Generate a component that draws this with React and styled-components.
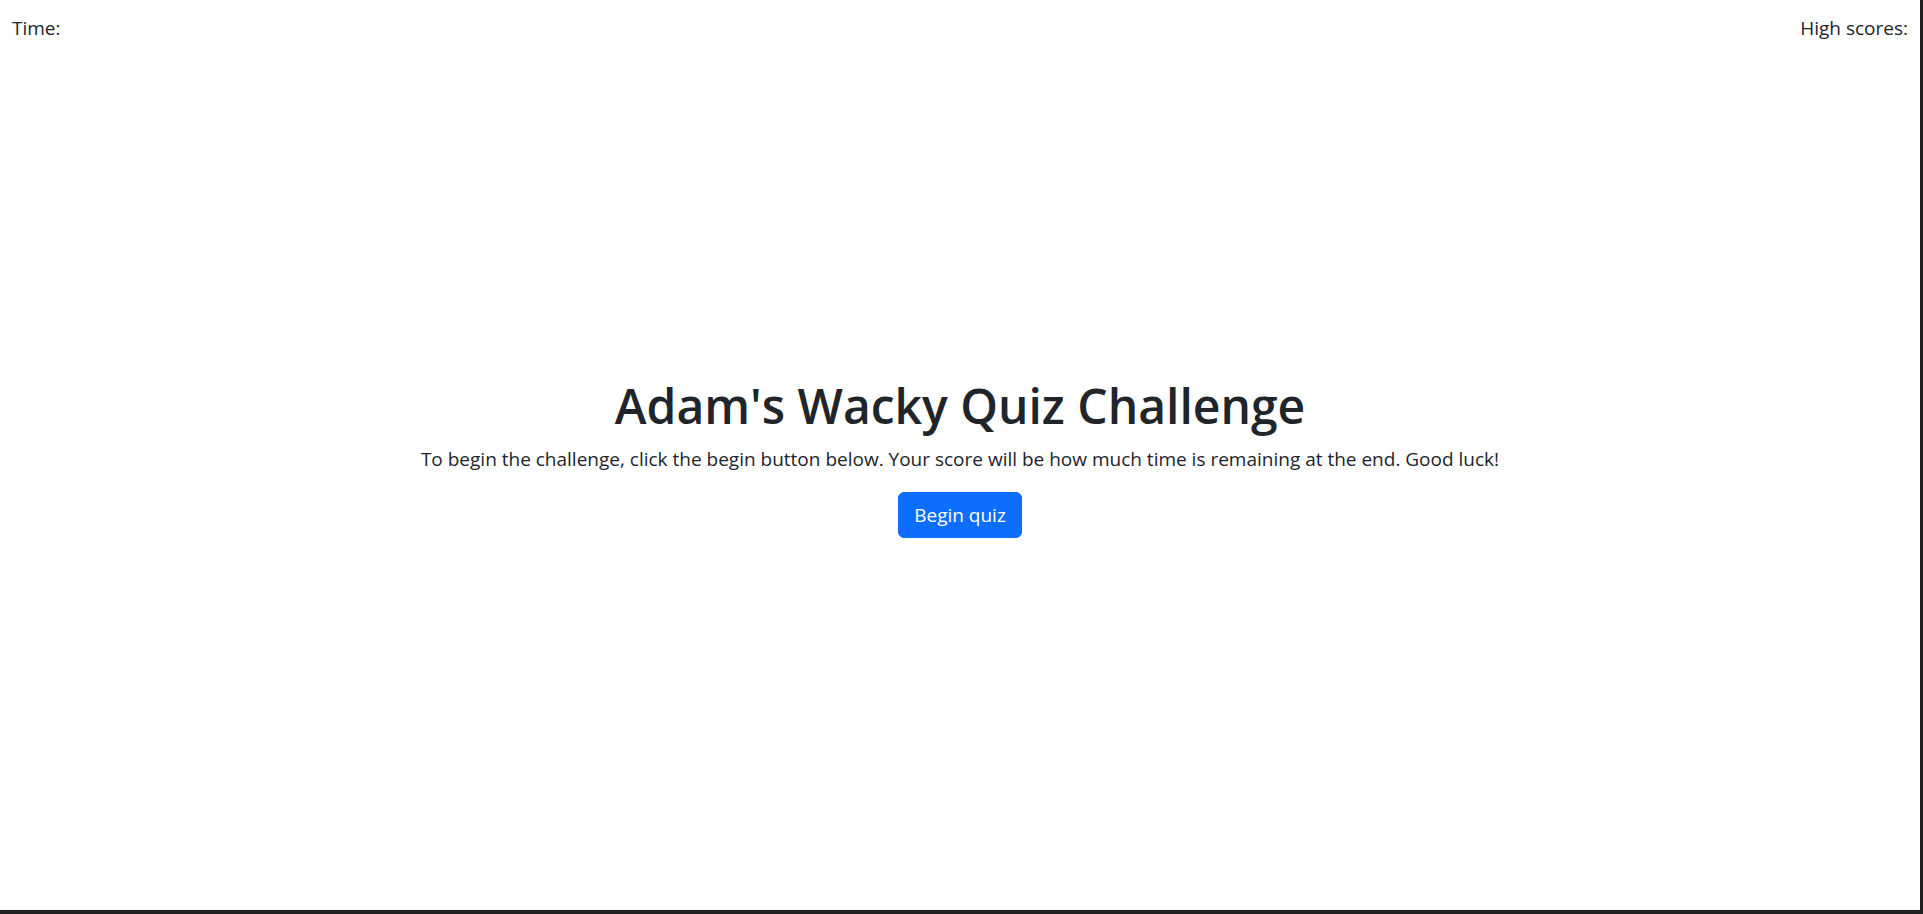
import React from 'react';
import styled, { createGlobalStyle } from 'styled-components';

const GlobalStyle = createGlobalStyle`
  html, body {
    margin: 0;
    padding: 0;
    background: #202020;
  }
  body {
    font-family: "Open Sans", "Liberation Sans", sans-serif;
    color: #212529;
  }
`;

const Page = styled.div`
  width: 1920px;
  height: 910px;
  background: #fff;
  display: flex;
  flex-direction: column;
`;

const TopBar = styled.header`
  display: flex;
  justify-content: space-between;
  padding: 13px 12px 0 12px;
  font-size: 19px;
  line-height: 30px;
`;

const Main = styled.main`
  flex: 1;
  display: flex;
  flex-direction: column;
  align-items: center;
  justify-content: center;
  padding-bottom: 40px;
`;

const Title = styled.h1`
  margin: 0 0 8px 0;
  font-size: 48px;
  font-weight: 600;
  line-height: 60px;
`;

const Intro = styled.p`
  margin: 0 0 18px 0;
  font-size: 19px;
  line-height: 30px;
`;

const Button = styled.button`
  font-family: inherit;
  font-size: 19px;
  line-height: 30px;
  color: #fff;
  background: #0d6efd;
  border: 1px solid #0d6efd;
  border-radius: 6px;
  padding: 7px 15px;
  cursor: pointer;
`;

const App = () => {
  return (
    <>
      <GlobalStyle />
      <Page>
        <TopBar>
          <span>Time:</span>
          <span>High scores:</span>
        </TopBar>
        <Main>
          <Title>Adam's Wacky Quiz Challenge</Title>
          <Intro>
            To begin the challenge, click the begin button below. Your score will be how much time is remaining at the end. Good luck!
          </Intro>
          <Button>Begin quiz</Button>
        </Main>
      </Page>
    </>
  );
};

export default App;
